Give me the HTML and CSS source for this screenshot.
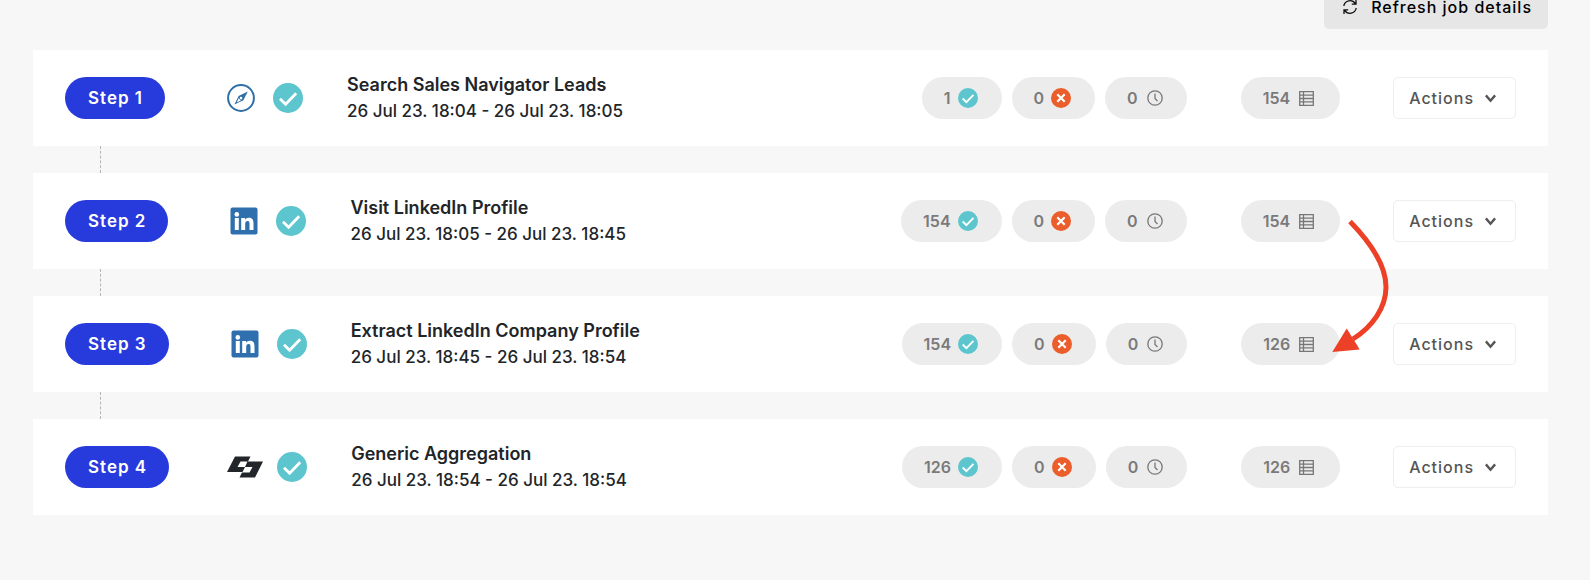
FILE: index.html
```html
<!DOCTYPE html>
<html lang="en">
<head>
<meta charset="utf-8">
<title>Job details</title>
<link rel="stylesheet" href="styles.css">
</head>
<body>
<svg class="sprite" aria-hidden="true">
  <symbol id="check" viewBox="0 0 30 30"><circle cx="15" cy="15" r="15" fill="#5cc5ce"/><path d="M7 15.800l5.600 5.400L23.200 10.200" fill="none" stroke="#fff" stroke-width="2.800"/></symbol>
  <symbol id="cross" viewBox="0 0 20 20"><circle cx="10" cy="10" r="10" fill="#eb5d2a"/><path d="M6.300 6.300l7.400 7.400M13.700 6.300l-7.400 7.400" stroke="#fff" stroke-width="2.200"/></symbol>
  <symbol id="clock" viewBox="0 0 16 16"><circle cx="8" cy="8" r="7.200" fill="none" stroke="#777" stroke-width="1.300"/><path d="M8 3.500V8.500L10.500 11" fill="none" stroke="#777" stroke-width="1.300"/></symbol>
  <symbol id="table" viewBox="0 0 15 15"><path d="M.7.700h13.600v13.600H.7zM.7 4.100h13.600M.7 7.500h13.600M.7 10.900h13.600M4.500.700v13.600" fill="none" stroke="#777" stroke-width="1.300"/></symbol>
  <symbol id="chevron" viewBox="0 0 10 8"><path d="M.8 1.200L5 6l4.200-4.800" fill="none" stroke="#555" stroke-width="2.200"/></symbol>
  <symbol id="linkedin" viewBox="0 0 28 28"><rect x=".5" y=".5" width="27" height="27" rx="2" fill="#2f6fad"/><circle cx="6.800" cy="7.400" r="2.300" fill="#fff"/><path d="M4.800 11h4v12h-4zM11.200 11h3.900v1.700c.7-1.200 2-2 3.800-2 3.700 0 4.600 2.300 4.600 5.700V23h-4v-5.900c0-1.700-.2-3-1.900-3s-2.400 1.200-2.400 3V23h-4z" fill="#fff"/></symbol>
</svg>
<main class="page">
  <div class="toolbar">
    <button class="refresh" type="button">
      <svg class="icon-refresh" viewBox="0 0 16 16" aria-hidden="true"><path d="M1.800 7A6.300 6.300 0 0 1 13.300 4.600M14.200 9A6.300 6.300 0 0 1 2.700 11.400M14 1v4.200H9.800M2 15v-4.200h4.200" fill="none" stroke="#111" stroke-width="1.300"/></svg>
      Refresh job details
    </button>
  </div>
  <ol class="steps">
    <li class="step">
      <span class="badge">Step 1</span>
      <span class="source"><svg class="icon-source" viewBox="0 0 28 28" aria-hidden="true"><circle cx="14" cy="14" r="12.900" fill="none" stroke="#2f6fa8" stroke-width="2"/><path d="M20.800 7.600L16.400 16.200 7.400 20.600 11.600 12z" fill="#2f6fa8"/><path d="M11.600 14.200l2.200 2.400-4 2z" fill="#fff"/><circle cx="14" cy="14.100" r="1.300" fill="#fff"/></svg></span>
      <svg class="icon-status" role="img" aria-label="Completed"><use href="#check"/></svg>
      <div class="info"><h2 class="title">Search Sales Navigator Leads</h2><p class="time">26 Jul 23. 18:04 - 26 Jul 23. 18:05</p></div>
      <div class="counts">
        <span class="pill">1<svg class="icon-round"><use href="#check"/></svg></span>
        <span class="pill">0<svg class="icon-round"><use href="#cross"/></svg></span>
        <span class="pill pill-wide">0<svg class="icon-clock"><use href="#clock"/></svg></span>
      </div>
      <span class="pill total">154<svg class="icon-table"><use href="#table"/></svg></span>
      <button class="actions" type="button" aria-haspopup="menu">Actions<svg class="icon-chevron"><use href="#chevron"/></svg></button>
    </li>
    <li class="step">
      <span class="badge">Step 2</span>
      <span class="source"><svg class="icon-source"><use href="#linkedin"/></svg></span>
      <svg class="icon-status" role="img" aria-label="Completed"><use href="#check"/></svg>
      <div class="info"><h2 class="title">Visit LinkedIn Profile</h2><p class="time">26 Jul 23. 18:05 - 26 Jul 23. 18:45</p></div>
      <div class="counts">
        <span class="pill">154<svg class="icon-round"><use href="#check"/></svg></span>
        <span class="pill">0<svg class="icon-round"><use href="#cross"/></svg></span>
        <span class="pill pill-wide">0<svg class="icon-clock"><use href="#clock"/></svg></span>
      </div>
      <span class="pill total">154<svg class="icon-table"><use href="#table"/></svg>
        <svg class="arrow" viewBox="0 0 70 145" aria-hidden="true"><path d="M24 6.500C43 26 60 49 60 72c0 21-14 40-33 52" fill="none" stroke="#ec4126" stroke-width="5"/><path d="M6.300 137L20.700 113.500 33.700 134.500z" fill="#ec4126"/></svg>
      </span>
      <button class="actions" type="button" aria-haspopup="menu">Actions<svg class="icon-chevron"><use href="#chevron"/></svg></button>
    </li>
    <li class="step">
      <span class="badge">Step 3</span>
      <span class="source"><svg class="icon-source"><use href="#linkedin"/></svg></span>
      <svg class="icon-status" role="img" aria-label="Completed"><use href="#check"/></svg>
      <div class="info"><h2 class="title">Extract LinkedIn Company Profile</h2><p class="time">26 Jul 23. 18:45 - 26 Jul 23. 18:54</p></div>
      <div class="counts">
        <span class="pill">154<svg class="icon-round"><use href="#check"/></svg></span>
        <span class="pill">0<svg class="icon-round"><use href="#cross"/></svg></span>
        <span class="pill pill-wide">0<svg class="icon-clock"><use href="#clock"/></svg></span>
      </div>
      <span class="pill total">126<svg class="icon-table"><use href="#table"/></svg></span>
      <button class="actions" type="button" aria-haspopup="menu">Actions<svg class="icon-chevron"><use href="#chevron"/></svg></button>
    </li>
    <li class="step">
      <span class="badge">Step 4</span>
      <span class="source"><svg class="icon-aggregate" viewBox="0 0 36 22" aria-hidden="true"><path d="M8 .5H23.500L21 5.500H13.500L10.500 11H18L15.500 16H0zM20.500 5.500H36L28 21.500H12.500L15 16.500H22.500L25.500 11H18z" fill="#22262a"/></svg></span>
      <svg class="icon-status" role="img" aria-label="Completed"><use href="#check"/></svg>
      <div class="info"><h2 class="title">Generic Aggregation</h2><p class="time">26 Jul 23. 18:54 - 26 Jul 23. 18:54</p></div>
      <div class="counts">
        <span class="pill">126<svg class="icon-round"><use href="#check"/></svg></span>
        <span class="pill">0<svg class="icon-round"><use href="#cross"/></svg></span>
        <span class="pill pill-wide">0<svg class="icon-clock"><use href="#clock"/></svg></span>
      </div>
      <span class="pill total">126<svg class="icon-table"><use href="#table"/></svg></span>
      <button class="actions" type="button" aria-haspopup="menu">Actions<svg class="icon-chevron"><use href="#chevron"/></svg></button>
    </li>
  </ol>
</main>
</body>
</html>
```
FILE: styles.css
```css
* { box-sizing: border-box; }
body {
  margin: 0;
  background: #f7f7f7;
  color: #212529;
  font-family: Inter, "Liberation Sans", sans-serif;
  font-size: 16px;
}
.sprite { position: absolute; width: 0; height: 0; }
svg { display: block; flex: none; }
.page { padding: 0 42px 40px 33px; }
.toolbar { display: flex; justify-content: flex-end; margin-top: -15px; }
.refresh {
  display: flex;
  align-items: center;
  gap: 13px;
  height: 44px;
  padding: 0 16px 0 18px;
  border: 0;
  border-radius: 5px;
  background: #e6e6e6;
  color: #000;
  font: 500 16px/24px Inter, sans-serif;
  letter-spacing: 1px;
}
.icon-refresh { width: 16px; height: 16px; }
.steps {
  display: flex;
  flex-direction: column;
  gap: 27px;
  margin: 21px 0 0;
  padding: 0;
  list-style: none;
}
.step {
  position: relative;
  display: flex;
  align-items: center;
  min-height: 96px;
  padding: 8px 32px;
  background: #fff;
}
.step + .step::before {
  content: "";
  position: absolute;
  bottom: 100%;
  left: 67px;
  height: 27px;
  border-left: 1px dashed #b5b5b5;
}
.badge {
  padding: 9px 22px 9px 23px;
  border-radius: 21px;
  background: #273adb;
  color: #fff;
  font-size: 17px;
  font-weight: 600;
  line-height: 24px;
  letter-spacing: 1px;
}
.source { display: flex; justify-content: center; width: 36px; margin: 0 14px 0 58px; }
.icon-source { width: 28px; height: 28px; }
.icon-aggregate { width: 36px; height: 22px; }
.icon-status { width: 30px; height: 30px; }
.info { flex: 1; margin-left: 44px; }
.title, .time { margin: 0; line-height: 27px; }
.title { font-size: 18px; font-weight: 600; }
.time { font-size: 17px; font-weight: 500; }
.counts { display: flex; gap: 10px; }
.pill {
  display: flex;
  align-items: center;
  gap: 7px;
  height: 42px;
  padding: 0 24px 0 22px;
  border-radius: 21px;
  background: #ececec;
  color: #7a7a7a;
  font-weight: 600;
  line-height: 24px;
}
.pill-wide { gap: 9px; }
.icon-round { width: 20px; height: 20px; }
.icon-clock { width: 16px; height: 16px; }
.total { position: relative; gap: 9px; margin: 0 53px 0 54px; padding-right: 26px; }
.icon-table { width: 15px; height: 15px; }
.arrow { position: absolute; top: 15px; left: 85px; z-index: 1; width: 70px; height: 145px; }
.actions {
  display: flex;
  align-items: center;
  gap: 11px;
  height: 42px;
  padding: 0 19px 0 15px;
  border: 1px solid #eee;
  border-radius: 5px;
  background: #fff;
  color: #555;
  font: 500 16px/24px Inter, sans-serif;
  letter-spacing: 1px;
}
.icon-chevron { width: 11px; height: 9px; }
```
